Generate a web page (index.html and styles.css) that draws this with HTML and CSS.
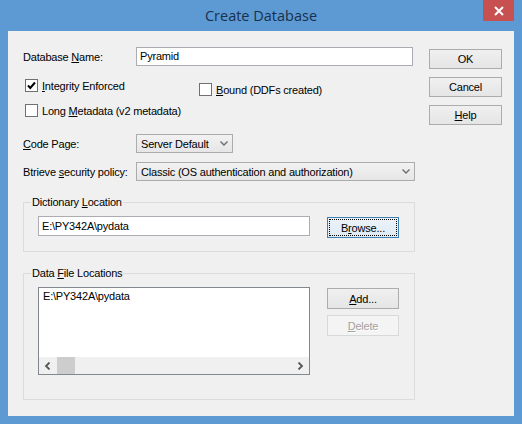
FILE: index.html
```html
<!DOCTYPE html>
<html>
<head>
<meta charset="utf-8">
<title>Create Database</title>
<link rel="stylesheet" href="styles.css">
</head>
<body>
<div class="window">
  <div class="titlebar">
    <div></div>
    <div class="title">Create Database</div>
    <div class="close"><svg width="10" height="10" viewBox="0 0 10 10"><path d="M1 1L9 9M9 1L1 9" stroke="#fff" stroke-width="2"/></svg></div>
  </div>
  <div class="client">
    <div class="main">
      <div class="row name-row">
        <label class="lbl">Database <u>N</u>ame:</label>
        <div class="input name-input">Pyramid</div>
      </div>
      <div class="checks">
        <div class="check integrity"><span class="box"><svg width="11" height="11" viewBox="0 0 11 11"><path d="M2 5.5L4.3 8L9 2.5" fill="none" stroke="#000" stroke-width="2"/></svg></span><span><u>I</u>ntegrity Enforced</span></div>
        <div class="check bound"><span class="box"></span><span><u>B</u>ound (DDFs created)</span></div>
      </div>
      <div class="check long"><span class="box"></span><span>Long <u>M</u>etadata (v2 metadata)</span></div>
      <div class="row code-row">
        <label class="lbl"><u>C</u>ode Page:</label>
        <div class="combo code-combo"><span>Server Default</span><svg width="8" height="5" viewBox="0 0 8 5"><path d="M0.5 0.5L4 4L7.5 0.5" fill="none" stroke="#6d6d6d" stroke-width="1.4"/></svg></div>
      </div>
      <div class="row sec-row">
        <label class="lbl">Btrieve <u>s</u>ecurity policy:</label>
        <div class="combo sec-combo"><span>Classic (OS authentication and authorization)</span><svg width="8" height="5" viewBox="0 0 8 5"><path d="M0.5 0.5L4 4L7.5 0.5" fill="none" stroke="#6d6d6d" stroke-width="1.4"/></svg></div>
      </div>
      <div class="group dict">
        <span class="group-title">Dictionary <u>L</u>ocation</span>
        <div class="input path-input">E:\PY342A\pydata</div>
        <div class="btn focus browse">B<u>r</u>owse...</div>
      </div>
      <div class="group files">
        <span class="group-title">Data <u>F</u>ile Locations</span>
        <div class="listbox">
          <div class="items">E:\PY342A\pydata</div>
          <div class="hscroll">
            <div class="arrow"><svg width="7" height="8" viewBox="0 0 7 8"><path d="M5.5 0.5L2 4L5.5 7.5" fill="none" stroke="#555" stroke-width="1.8"/></svg></div>
            <div class="thumb"></div>
            <div class="track"></div>
            <div class="arrow"><svg width="7" height="8" viewBox="0 0 7 8"><path d="M1.5 0.5L5 4L1.5 7.5" fill="none" stroke="#555" stroke-width="1.8"/></svg></div>
          </div>
        </div>
        <div class="btn-col">
          <div class="btn"><u>A</u>dd...</div>
          <div class="btn disabled"><u>D</u>elete</div>
        </div>
      </div>
    </div>
    <div class="side">
      <div class="btn ok">OK</div>
      <div class="btn">Cancel</div>
      <div class="btn"><u>H</u>elp</div>
    </div>
  </div>
</div>
</body>
</html>
```

FILE: styles.css
```css
* { box-sizing: border-box; }
html, body { margin: 0; padding: 0; }
body {
  width: 522px;
  height: 424px;
  overflow: hidden;
  font-family: "Liberation Sans", Arial, sans-serif;
  font-size: 11px;
  letter-spacing: -0.2px;
  color: #000;
}
u { text-decoration: underline; text-underline-offset: 1px; }
.window {
  width: 522px;
  height: 424px;
  background: #5d9ad3;
  padding: 0 8px 8px 8px;
  display: flex;
  flex-direction: column;
}
.titlebar {
  height: 31px;
  display: grid;
  grid-template-columns: 1fr auto 1fr;
}
.title {
  font-family: "Open Sans", "Noto Sans", sans-serif;
  font-size: 14.5px;
  letter-spacing: 0;
  color: #18304d;
  line-height: 31px;
}
.close {
  justify-self: end;
  width: 31px;
  height: 21px;
  background: #c75050;
  display: flex;
  align-items: center;
  justify-content: center;
}
.client {
  flex: 1;
  background: #f0f0f0;
  display: flex;
  align-items: flex-start;
}
.main {
  width: 392px;
  margin-left: 15px;
  display: flex;
  flex-direction: column;
}
.side {
  width: 73px;
  margin-left: 14px;
  margin-top: 18px;
  display: flex;
  flex-direction: column;
  gap: 8px;
}
.row { display: flex; align-items: center; }
.lbl { width: 113px; white-space: nowrap; }
.name-row { margin-top: 16px; height: 19px; }
.input {
  background: #fff;
  border: 1px solid #abadb3;
  height: 20px;
  line-height: 18px;
  padding-left: 3px;
  white-space: nowrap;
}
.name-input { width: 277px; height: 19px; line-height: 17px; }
.checks { display: flex; align-items: flex-start; margin-top: 13px; }
.check { display: flex; align-items: center; height: 13px; gap: 4px; margin-left: 2px; white-space: nowrap; }
.check.integrity { width: 174px; }
.check.bound { margin-top: 4px; margin-left: 0; }
.check.long { margin-top: 8px; }
.box {
  width: 13px;
  height: 13px;
  border: 1px solid #707070;
  background: #fff;
  display: flex;
  align-items: center;
  justify-content: center;
  flex: none;
}
.code-row { margin-top: 17px; height: 19px; }
.sec-row { margin-top: 9px; height: 19px; }
.combo {
  height: 19px;
  border: 1px solid #acacac;
  background: linear-gradient(#f2f2f2, #e6e6e6);
  display: flex;
  align-items: center;
  justify-content: space-between;
  padding: 0 4px 0 4px;
  white-space: nowrap;
}
.code-combo { width: 97px; }
.sec-combo { width: 279px; }
.group {
  position: relative;
  border: 1px solid #dcdcdc;
  display: flex;
  align-items: flex-start;
  padding: 13px 0 0 14px;
}
.group-title {
  position: absolute;
  top: -7px;
  left: 7px;
  padding: 0 1px;
  background: #f0f0f0;
  line-height: 13px;
  white-space: nowrap;
}
.dict { margin-top: 21px; height: 50px; }
.files { margin-top: 21px; height: 127px; }
.path-input { width: 272px; }
.btn {
  height: 20px;
  border: 1px solid #acacac;
  background: linear-gradient(#f0f0f0, #e5e5e5);
  display: flex;
  align-items: center;
  justify-content: center;
  white-space: nowrap;
}
.side .btn { height: 20px; }
.browse {
  width: 72px;
  height: 21px;
  margin-left: 17px;
  margin-top: 1px;
  border-color: #3c7fb1;
  outline: 1px dotted #000;
  outline-offset: -3px;
  background: linear-gradient(#ecf3fa, #e0eaf4);
}
.listbox {
  width: 272px;
  height: 88px;
  border: 1px solid #828790;
  background: #fff;
  display: flex;
  flex-direction: column;
}
.items { flex: 1; padding: 2px 0 0 4px; line-height: 13px; }
.hscroll {
  height: 17px;
  background: #f0f0f0;
  display: flex;
}
.arrow { width: 17px; display: flex; align-items: center; justify-content: center; }
.thumb { width: 18px; background: #cdcdcd; margin-left: 1px; }
.track { flex: 1; }
.btn-col {
  margin-left: 17px;
  margin-top: 1px;
  display: flex;
  flex-direction: column;
  gap: 6px;
}
.btn-col .btn { width: 72px; height: 21px; }
.btn.disabled {
  border-color: #d9d9d9;
  background: #f4f4f4;
  color: #a0a0a0;
  text-shadow: 1px 1px 0 #fff;
}
```
